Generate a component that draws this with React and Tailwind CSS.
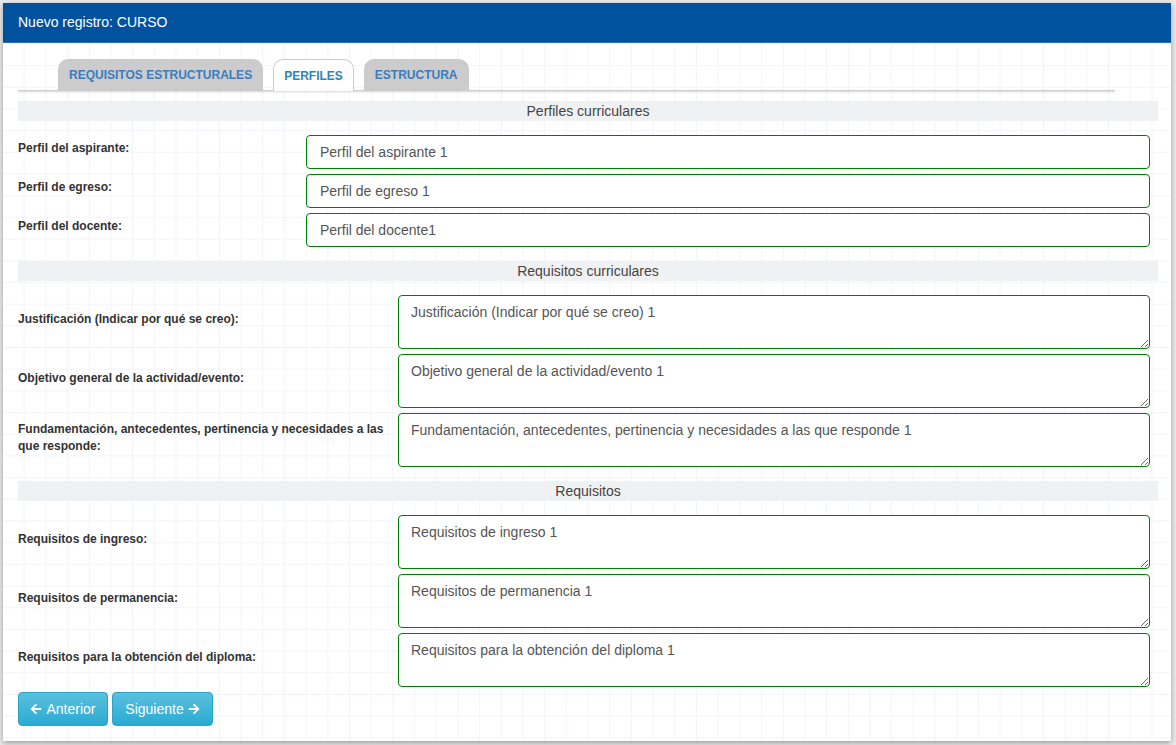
import React from "react";
import { FaArrowLeft, FaArrowRight } from "react-icons/fa";

const font = { fontFamily: '"Liberation Sans", Arial, sans-serif' };

function SectionHeader({ children }) {
  return (
    <div className="h-[20px] bg-[#f0f1f3] flex items-center justify-center text-[14px] text-[#444] leading-none">
      {children}
    </div>
  );
}

function InputRow({ label, value }) {
  return (
    <div className="flex items-center h-[34px]">
      <div className="w-[288px] shrink-0 pb-[7px] text-[12px] font-bold text-[#333] leading-[17px]">{label}</div>
      <input
        readOnly
        value={value}
        className="flex-1 mr-[8px] h-[34px] border border-[#008000] rounded-[4px] px-[13px] text-[14px] text-[#555] bg-white outline-none"
        style={font}
      />
    </div>
  );
}

function TextRow({ label, value }) {
  return (
    <div className="flex items-center h-[54px]">
      <div className="w-[380px] shrink-0 pb-[5px] pr-[6px] text-[12px] font-bold text-[#333] leading-[17px]">{label}</div>
      <textarea
        readOnly
        defaultValue={value}
        className="flex-1 mr-[8px] h-[54px] border border-[#008000] rounded-[4px] px-[12px] pt-[6px] text-[14px] text-[#555] bg-white outline-none resize-y leading-[20px]"
        style={font}
      />
    </div>
  );
}

export default function App() {
  return (
    <div
      className="w-[1176px] h-[745px] overflow-hidden bg-[#ebebeb] pt-[3px] pl-[3px]"
      style={font}
    >
      <div className="w-[1168px] h-[738px] bg-white shadow-[0_2px_6px_rgba(0,0,0,0.35)] flex flex-col bg-[linear-gradient(to_right,#f3f3fb_1px,transparent_1px),linear-gradient(to_bottom,#f3f3fb_1px,transparent_1px)] bg-[size:21.7px_21.7px] bg-[position:-1px_-3px]">
        <div className="h-[40px] bg-[#00529f] border-b border-[#2a6fb0] flex items-center px-[15px] text-white text-[14px]">
          Nuevo registro: CURSO
        </div>
        <div className="pl-[15px] pr-[13px] pt-[16px]">
          <div className="relative pl-[40px] flex items-end gap-[10px] h-[32px] w-[1097px]">
            <div className="absolute left-0 right-0 bottom-0 h-[1px] bg-[#cfcfcf] shadow-[0_1px_2px_rgba(0,0,0,0.25)]" />
            <div className="relative h-[32px] px-[11px] bg-[#cccccc] rounded-t-[10px] flex items-center text-[12px] font-bold text-[#3a7cc0]">
              REQUISITOS ESTRUCTURALES
            </div>
            <div className="relative h-[32px] px-[10px] bg-white border border-b-0 border-[#cccccc] rounded-t-[10px] flex items-center text-[12px] font-bold text-[#2f84b8] z-10">
              PERFILES
            </div>
            <div className="relative h-[32px] px-[11px] bg-[#cccccc] rounded-t-[10px] flex items-center text-[12px] font-bold text-[#3a7cc0]">
              ESTRUCTURA
            </div>
          </div>

          <div className="mt-[10px]">
            <SectionHeader>Perfiles curriculares</SectionHeader>
          </div>
          <div className="mt-[14px] flex flex-col gap-[5px]">
            <InputRow label="Perfil del aspirante:" value="Perfil del aspirante 1" />
            <InputRow label="Perfil de egreso:" value="Perfil de egreso 1" />
            <InputRow label="Perfil del docente:" value="Perfil del docente1" />
          </div>

          <div className="mt-[14px]">
            <SectionHeader>Requisitos curriculares</SectionHeader>
          </div>
          <div className="mt-[14px] flex flex-col gap-[5px]">
            <TextRow label="Justificación (Indicar por qué se creo):" value="Justificación (Indicar por qué se creo) 1" />
            <TextRow label="Objetivo general de la actividad/evento:" value="Objetivo general de la actividad/evento 1" />
            <TextRow
              label="Fundamentación, antecedentes, pertinencia y necesidades a las que responde:"
              value="Fundamentación, antecedentes, pertinencia y necesidades a las que responde 1"
            />
          </div>

          <div className="mt-[14px]">
            <SectionHeader>Requisitos</SectionHeader>
          </div>
          <div className="mt-[14px] flex flex-col gap-[5px]">
            <TextRow label="Requisitos de ingreso:" value="Requisitos de ingreso 1" />
            <TextRow label="Requisitos de permanencia:" value="Requisitos de permanencia 1" />
            <TextRow label="Requisitos para la obtención del diploma:" value="Requisitos para la obtención del diploma 1" />
          </div>

          <div className="mt-[5px] flex gap-[4px]">
            <button className="h-[34px] w-[90px] rounded-[4px] border border-[#28a4c9] bg-[linear-gradient(to_bottom,#5bc0de,#2aabd2)] text-white text-[14px] flex items-center justify-center gap-[4px]">
              <FaArrowLeft className="text-[12px]" />
              Anterior
            </button>
            <button className="h-[34px] w-[101px] rounded-[4px] border border-[#28a4c9] bg-[linear-gradient(to_bottom,#5bc0de,#2aabd2)] text-white text-[14px] flex items-center justify-center gap-[4px]">
              Siguiente
              <FaArrowRight className="text-[12px]" />
            </button>
          </div>
        </div>
      </div>
    </div>
  );
}
